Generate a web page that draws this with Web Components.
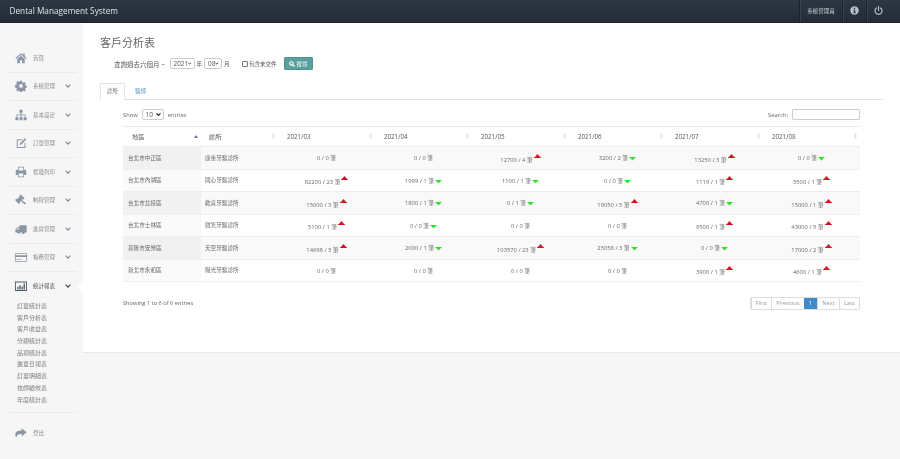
<!DOCTYPE html>
<html lang="zh-Hant">
<head>
<meta charset="utf-8">
<title>Dental Management System</title>
<style>
  html, body { margin: 0; height: 100%; background: #f5f5f5; }
  body { font-family: "Open Sans", "Noto Sans CJK TC", sans-serif; color: #555; overflow: hidden; }
</style>
</head>
<body>
<dms-app></dms-app>

<script>
const ICONS = {
  home: '<path d="M8 1.5 0.5 8l1 1.2L8 3.7l6.5 5.5 1-1.2L13 5.8V2h-2v2.1zM3 9.2V15h3.6v-4h2.8v4H13V9.2L8 5z"/>',
  gear: '<path fill-rule="evenodd" d="M6.6 1h2.8l.4 2 1.2.5 1.7-1.1 2 2-1.1 1.7.5 1.2 2 .4v2.8l-2 .4-.5 1.2 1.1 1.7-2 2-1.7-1.1-1.2.5-.4 2H6.6l-.4-2-1.2-.5-1.7 1.1-2-2 1.1-1.7-.5-1.2-2-.4V6.5l2-.4.5-1.2-1.1-1.7 2-2 1.7 1.1 1.2-.5zM8 5.4a2.6 2.6 0 1 0 0 5.2 2.6 2.6 0 0 0 0-5.2z" transform="translate(.3 .2) scale(.96)"/>',
  sitemap: '<path d="M6 1h4v4H8.6v2.2H14V11h1.5v4h-4v-4H13V8.3H8.6V11H10v4H6v-4h1.4V8.3H3V11h1.5v4h-4v-4H2V7.2h5.4V5H6z"/>',
  edit: '<path d="M2.5 3H10L8.8 4.3H3.6v9h9V8.6l1.3-1.3v7.2H2.3V3z M13.3 1.6l1.6 1.6-6.6 6.7-2.2.6.6-2.2z"/>',
  print: '<path fill-rule="evenodd" d="M4 1h8v4h1.5A1.5 1.5 0 0 1 15 6.500V12h-3v3H4v-3H1V6.500A1.500 1.500 0 0 1 2.500 5H4zm1 1v4h6V2zm0 8v4h6v-4z"/>',
  gavel: '<path d="M7.500 1.500 12.800 6.800 10.800 8.800 9.900 7.900 8.700 9.100 14.800 13.200 13.200 15 7.600 10.200 6.400 11.400 7.300 12.300 5.300 14.300 0 9 2 7 2.900 7.900 6.500 4.300 5.500 3.500z" transform="translate(0 -1)"/>',
  truck: '<path fill-rule="evenodd" d="M6 3h9.500v9.500H13a2 2 0 0 1-4 0H6.800a2 2 0 0 1-3.900.2H.5V8.500L3 5.500h3zM3.500 6.500 1.800 8.500H5V6.500z"/>',
  card: '<path fill-rule="evenodd" d="M1.500 2.500h13A1.500 1.500 0 0 1 16 4v9a1.500 1.500 0 0 1-1.500 1.500h-13A1.500 1.500 0 0 1 0 13V4a1.500 1.500 0 0 1 1.500-1.500zM1 3.500V5.500h14V3.500zM1 8v5.500h14V8zM2 11h3v1H2zM6 11h3v1H6z"/>',
  chart: '<path fill-rule="evenodd" d="M0 2h16v12.500H0zM1.200 3.200v10.100h13.600V3.200z"/><path d="M3 9h1.800v3.500H3zM5.800 7h1.800v5.500H5.800zM8.600 8.500h1.800v4H8.600zM11.400 4.500h1.800v8h-1.800z"/>',
  logout: '<path d="M9 1.500 15.500 7 9 12.500V9.300C5 9.300 2.500 10 1.800 14 .8 12.700.4 11.500.4 10 .4 6.500 3.500 4.800 9 4.800z"/>'
};

const svgIcon = (name, size, color) =>
  `<svg width="${size}" height="${size}" viewBox="0 0 16 16" fill="${color}" aria-hidden="true">${ICONS[name]}</svg>`;

class AppTopbar extends HTMLElement {
  connectedCallback() {
    this.attachShadow({ mode: 'open' });
    this.shadowRoot.innerHTML = `
      <style>
        :host {
          display: flex;
          align-items: stretch;
          justify-content: space-between;
          height: 22.500px;
          background: linear-gradient(180deg, #2c3744 0%, #232c37 100%);
          color: #dfe4e9;
          box-sizing: border-box;
          border-bottom: 1px solid #1c232c;
        }
        .brand { padding-left: 9.500px; font-size: 8.250px; line-height: 21px; font-weight: 400; }
        .tools { display: flex; margin-right: 10px; }
        .tool {
          display: flex;
          align-items: center;
          justify-content: center;
          border-left: 1px solid #1b222b;
          box-shadow: inset 1px 0 0 #364250;
          font-size: 5.500px;
        }
        .user { width: 42px; color: #c9ced4; }
        .btn { width: 23px; }
      </style>
      <div class="brand">Dental Management System</div>
      <div class="tools">
        <div class="tool user">系統管理員</div>
        <div class="tool btn">
          <svg width="9" height="9" viewBox="0 0 16 16"><circle cx="8" cy="8" r="7.500" fill="#b9c0c8"/><path d="M6.800 3h2.400v2.200H6.800zM6 6.500h3.200V11.500H10.300V13H5.800V11.500H6.900V8H6z" fill="#27303b"/></svg>
        </div>
        <div class="tool btn">
          <svg width="9" height="9" viewBox="0 0 16 16" fill="none" stroke="#b9c0c8" stroke-width="2" stroke-linecap="round"><path d="M8 1v7"/><path d="M4.300 3.500a6.300 6.300 0 1 0 7.400 0"/></svg>
        </div>
      </div>
    `;
  }
}
customElements.define('app-topbar', AppTopbar);

class NavItem extends HTMLElement {
  connectedCallback() {
    const arrow = this.hasAttribute('arrow');
    const active = this.hasAttribute('active');
    const color = active ? '#4d5a6b' : '#8a96a5';
    this.attachShadow({ mode: 'open' });
    this.shadowRoot.innerHTML = `
      <style>
        :host {
          display: flex;
          align-items: center;
          height: 28.500px;
          margin: 0 6px 0 9px;
          box-sizing: border-box;
          border-bottom: 1px solid #ececec;
          font-size: 5.500px;
          color: ${active ? '#555' : '#8b8f94'};
        }
        :host([last]) { border-bottom: 0; }
        .icon { width: 24px; display: flex; justify-content: center; }
        .label { flex: 1; }
        svg.chev { margin-right: 6px; }
      </style>
      <span class="icon">${svgIcon(this.getAttribute('icon'), 12, color)}</span>
      <span class="label"><slot></slot></span>
      ${arrow ? `<svg class="chev" width="6" height="4" viewBox="0 0 6 4" fill="none" stroke="${active ? '#444' : '#7d8895'}" stroke-width="1.100"><path d="M.6.700 3 3.100 5.400.700"/></svg>` : ''}
    `;
  }
}
customElements.define('nav-item', NavItem);

class SideNav extends HTMLElement {
  connectedCallback() {
    const menu = [
      ['home', '首頁'], ['gear', '系統管理', 1], ['sitemap', '基本設定', 1],
      ['edit', '訂單管理', 1], ['print', '標籤列印', 1], ['gavel', '制程管理', 1],
      ['truck', '進貨管理', 1], ['card', '帳務管理', 1]
    ];
    const subs = ['訂單統計表', '客戶分析表', '客戶收益表', '分類統計表', '品項統計表', '進單日報表', '訂單明細表', '技師績效表', '年度統計表'];
    this.attachShadow({ mode: 'open' });
    this.shadowRoot.innerHTML = `
      <style>
        :host { display: block; width: 83px; flex: none; padding-top: 21.500px; box-sizing: border-box; position: relative; }
        .subs { display: flex; flex-direction: column; padding: .5px 0 0 17px; font-size: 6px; color: #7c7f83; }
        .subs span { height: 11.700px; line-height: 11.700px; white-space: nowrap; }
        .rule { height: 1px; background: #ececec; margin: 5.500px 6px 0 9px; }
        .notch {
          position: absolute; right: 0; top: 258px;
          width: 0; height: 0;
          border-top: 6px solid transparent;
          border-bottom: 6px solid transparent;
          border-right: 6px solid #fff;
        }
      </style>
      ${menu.map(([i, t, a]) => `<nav-item icon="${i}" ${a ? 'arrow' : ''}>${t}</nav-item>`).join('')}
      <nav-item icon="chart" arrow active last>統計報表</nav-item>
      <div class="subs">${subs.map(s => `<span>${s}</span>`).join('')}</div>
      <div class="rule"></div>
      <nav-item icon="logout" last style="margin-top:6px">登出</nav-item>
      <div class="notch"></div>
    `;
  }
}
customElements.define('side-nav', SideNav);

class MiniSelect extends HTMLElement {
  connectedCallback() {
    this.attachShadow({ mode: 'open' });
    this.shadowRoot.innerHTML = `
      <style>
        :host {
          display: inline-flex; align-items: center; justify-content: space-between;
          box-sizing: border-box; height: 10.500px; padding: 0 2px 0 3px;
          width: var(--w, 24px); border: 1px solid #ccc; border-radius: 2px; background: #fff;
          font-size: 6.400px; color: #555;
        }
      </style>
      <span>${this.getAttribute('value')}</span>
      <svg width="5" height="3" viewBox="0 0 5 3" fill="none" stroke="#222" stroke-width="1.100"><path d="M.5.400 2.500 2.400 4.500.400"/></svg>
    `;
  }
}
customElements.define('mini-select', MiniSelect);

class FilterBar extends HTMLElement {
  connectedCallback() {
    this.attachShadow({ mode: 'open' });
    this.shadowRoot.innerHTML = `
      <style>
        :host { display: flex; align-items: center; height: 14px; padding-left: 14px; font-size: 6.500px; color: #555; white-space: nowrap; }
        .small { font-size: 5.500px; }
        .q { width: 55.500px; }
        .unit { margin: 0 2px; }
        .chk { width: 6px; height: 6px; box-sizing: border-box; margin: 0 1px 0 10.500px; border: 1px solid #777; border-radius: 1px; background: #fff; }
        .btn {
          font-size: 5.500px; color: #fff; height: 13px; width: 29px; margin-left: 7px; box-sizing: border-box;
          background: #5ba09f; border: 1px solid #4f9291; border-radius: 1px;
          display: flex; align-items: center; justify-content: center; gap: 2px;
        }
      </style>
      <span class="q">查詢過去六個月 ~</span>
      <mini-select value="2021" style="--w:25px"></mini-select><span class="small unit">年</span>
      <mini-select value="08" style="--w:18px"></mini-select><span class="small unit">月</span>
      <span class="chk"></span><span class="small">包含未交件</span>
      <div class="btn"><svg width="6" height="6" viewBox="0 0 16 16" fill="none" stroke="#fff" stroke-width="3"><circle cx="6.500" cy="6.500" r="4.500"/><path d="M10 10l5 5"/></svg>搜尋</div>
    `;
  }
}
customElements.define('filter-bar', FilterBar);

class TabBar extends HTMLElement {
  connectedCallback() {
    this.attachShadow({ mode: 'open' });
    this.shadowRoot.innerHTML = `
      <style>
        :host { display: flex; height: 17.500px; box-sizing: border-box; border-bottom: 1px solid #e4e4e4; font-size: 5.500px; }
        .tab { display: flex; align-items: center; justify-content: center; width: 25px; height: 16px; box-sizing: border-box; }
        .on { border: 1px solid #e4e4e4; border-bottom: 0; background: #fff; color: #777; height: 17.500px; padding-bottom: 1.500px; }
        .off { color: #5a94c4; width: 31px; }
      </style>
      <div class="tab on">診所</div>
      <div class="tab off">醫師</div>
    `;
  }
}
customElements.define('tab-bar', TabBar);

class TrendCell extends HTMLElement {
  connectedCallback() {
    const t = this.getAttribute('trend');
    let mark = '';
    if (t === 'up') {
      mark = '<svg class="up" width="7" height="4" viewBox="0 0 7 4"><path d="M3.500 0 5.600 2.400 7 3.500V4H0V3.500L1.400 2.400z" fill="#d5121b"/></svg>';
    } else if (t === 'down') {
      mark = '<svg class="down" width="7" height="3.500" viewBox="0 0 7 3.500"><path d="M0 0H7L5.400 1.500 3.500 3.500 1.600 1.500z" fill="#2fe02f"/></svg>';
    }
    this.attachShadow({ mode: 'open' });
    this.shadowRoot.innerHTML = `
      <style>
        :host { display: block; text-align: center; white-space: nowrap; }
        :host([trend="up"]) .txt { position: relative; top: 1.500px; }
        svg { margin-left: 1px; }
        .up { vertical-align: 2.500px; }
        .down { vertical-align: -0.500px; }
      </style>
      <span class="txt">${this.getAttribute('v')}</span>${mark}
    `;
  }
}
customElements.define('trend-cell', TrendCell);

class PageButtons extends HTMLElement {
  connectedCallback() {
    this.attachShadow({ mode: 'open' });
    this.shadowRoot.innerHTML = `
      <style>
        :host { display: inline-flex; height: 13px; font-size: 5.800px; color: #999; border: 1px solid #ddd; border-radius: 2px; box-sizing: border-box; }
        span { display: flex; align-items: center; justify-content: center; border-left: 1px solid #ddd; box-sizing: border-box; }
        span:first-child { border-left: 0; }
        .cur { background: #428bca; color: #fff; border-left: 0; }
      </style>
      <span style="width:20.500px">First</span>
      <span style="width:33px">Previous</span>
      <span class="cur" style="width:13px">1</span>
      <span style="width:22px">Next</span>
      <span style="width:20px">Last</span>
    `;
  }
}
customElements.define('page-buttons', PageButtons);

class ClinicTable extends HTMLElement {
  connectedCallback() {
    const months = ['2021/03', '2021/04', '2021/05', '2021/06', '2021/07', '2021/08'];
    const rows = [
      ['台北市中正區', '康重牙醫診所', ['0 / 0 筆', ''], ['0 / 0 筆', ''], ['12700 / 4 筆', 'up'], ['3200 / 2 筆', 'down'], ['13250 / 3 筆', 'up'], ['0 / 0 筆', 'down']],
      ['台北市內湖區', '開心牙醫診所', ['82200 / 23 筆', 'up'], ['1999 / 1 筆', 'down'], ['1100 / 1 筆', 'down'], ['0 / 0 筆', 'down'], ['1119 / 1 筆', 'up'], ['3500 / 1 筆', 'up']],
      ['台北市北投區', '歡喜牙醫診所', ['15000 / 3 筆', 'up'], ['1800 / 1 筆', 'down'], ['0 / 1 筆', 'down'], ['19050 / 5 筆', 'up'], ['4700 / 1 筆', 'down'], ['15000 / 1 筆', 'up']],
      ['台北市士林區', '微笑牙醫診所', ['5100 / 1 筆', 'up'], ['0 / 0 筆', 'down'], ['0 / 0 筆', ''], ['0 / 0 筆', ''], ['9500 / 1 筆', 'up'], ['43000 / 5 筆', 'up']],
      ['基隆市安樂區', '天空牙醫診所', ['14698 / 3 筆', 'up'], ['2000 / 1 筆', 'down'], ['103570 / 23 筆', 'up'], ['25058 / 3 筆', 'down'], ['0 / 0 筆', 'down'], ['17000 / 2 筆', 'up']],
      ['新北市永和區', '陽光牙醫診所', ['0 / 0 筆', ''], ['0 / 0 筆', ''], ['0 / 0 筆', ''], ['0 / 0 筆', ''], ['3900 / 1 筆', 'up'], ['4600 / 1 筆', 'up']]
    ];
    const sort = '<svg class="sort" width="3" height="6" viewBox="0 0 3 6" fill="#ddd"><path d="M1.500 0 3 2.500H0zM1.500 6 0 3.500H3z"/></svg>';
    const asc = '<svg class="sort" width="4" height="3" viewBox="0 0 4 3" fill="#6f70c4"><path d="M2 0 4 3H0z"/></svg>';
    this.attachShadow({ mode: 'open' });
    this.shadowRoot.innerHTML = `
      <style>
        :host { display: block; font-size: 5.800px; color: #666; }
        .top { display: flex; justify-content: space-between; align-items: center; height: 26px; box-sizing: border-box; padding-top: 3px; }
        .show { display: flex; align-items: center; gap: 4px; }
        .show mini-select { --w: 22px; }
        label { display: flex; align-items: center; }
        .top input { width: 68px; height: 11.500px; box-sizing: border-box; margin: 0 0 0 4px; border: 1px solid #ccc; border-radius: 1px; padding: 0; }
        table { width: 737px; border-collapse: collapse; table-layout: fixed; border-top: 1px solid #e8e8e8; }
        th { height: 20px; box-sizing: border-box; padding: 0; font-weight: 400; font-size: 6.200px; text-align: left; color: #555; }
        th div { display: flex; justify-content: space-between; align-items: center; padding: 0 3px 1px 9px; }
        th:nth-child(2) div { padding-left: 8px; }
        td { height: 22.500px; box-sizing: border-box; padding: 0; border-top: 1px solid #eee; color: #6a6a6a; }
        td.a { padding-left: 5px; font-size: 5.600px; }
        td.b { padding-left: 4px; font-size: 5.600px; }
        tbody tr:nth-child(odd) td { background: #f9f9f9; }
        tbody tr:nth-child(even) td.a { background: #fafafa; }
        tbody tr:nth-child(odd) td.a { background: #f1f1f1; }
        tbody tr:last-child td { border-bottom: 1px solid #eee; }
        .foot { display: flex; justify-content: space-between; align-items: center; margin-top: 14.500px; }
        .foot > span { font-size: 5.700px; }
      </style>
      <div class="top">
        <span class="show">Show<mini-select value="10"></mini-select>entries</span>
        <label>Search:<input></label>
      </div>
      <table>
        <colgroup><col style="width:78px"><col style="width:77px">${months.map(() => '<col style="width:97px">').join('')}</colgroup>
        <thead><tr>
          <th><div><span>地區</span>${asc}</div></th>
          <th><div><span>診所</span>${sort}</div></th>
          ${months.map(m => `<th><div><span>${m}</span>${sort}</div></th>`).join('')}
        </tr></thead>
        <tbody>
          ${rows.map(r => `<tr><td class="a">${r[0]}</td><td class="b">${r[1]}</td>${r.slice(2).map(c => `<td><trend-cell v="${c[0]}" trend="${c[1]}"></trend-cell></td>`).join('')}</tr>`).join('')}
        </tbody>
      </table>
      <div class="foot">
        <span>Showing 1 to 6 of 6 entries</span>
        <page-buttons></page-buttons>
      </div>
    `;
  }
}
customElements.define('clinic-table', ClinicTable);

class ReportPanel extends HTMLElement {
  connectedCallback() {
    this.attachShadow({ mode: 'open' });
    this.shadowRoot.innerHTML = `
      <style>
        :host {
          display: block; flex: 1; height: 330px; box-sizing: border-box; background: #fff;
          padding: 12px 16px 0 17px; border-bottom: 1px solid #e8e8e8;
        }
        h1 { margin: 0 0 7px; font-size: 11px; line-height: 15px; font-weight: 400; color: #666; }
        filter-bar { margin-bottom: 12px; }
        clinic-table { margin: 0 24px 0 23px; }
      </style>
      <h1>客戶分析表</h1>
      <filter-bar></filter-bar>
      <tab-bar></tab-bar>
      <clinic-table></clinic-table>
    `;
  }
}
customElements.define('report-panel', ReportPanel);

class DmsApp extends HTMLElement {
  connectedCallback() {
    this.attachShadow({ mode: 'open' });
    this.shadowRoot.innerHTML = `
      <style>
        /* reference is a downscaled capture, so everything is a touch soft */
        :host { display: block; filter: blur(.25px); }
        .body { display: flex; align-items: flex-start; background: #f6f6f6; height: 436.500px; }
      </style>
      <app-topbar></app-topbar>
      <div class="body">
        <side-nav></side-nav>
        <report-panel></report-panel>
      </div>
    `;
  }
}
customElements.define('dms-app', DmsApp);
</script>
</body>
</html>
